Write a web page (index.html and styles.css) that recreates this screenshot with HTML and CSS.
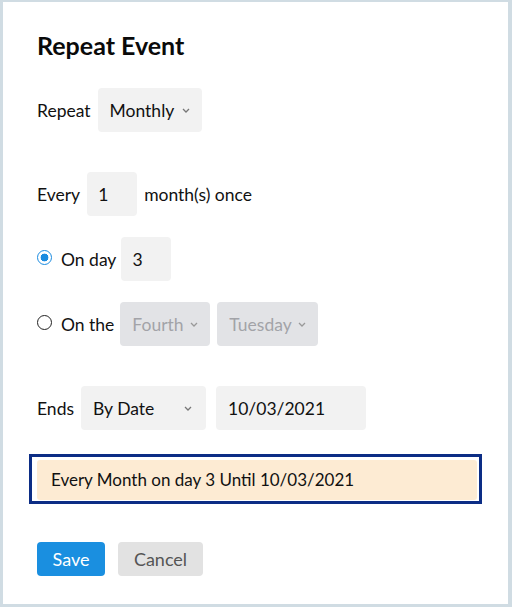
FILE: index.html
```html
<!DOCTYPE html>
<html lang="en">
<head>
    <meta charset="UTF-8">
    <title>Repeat Event</title>
    <link rel="stylesheet" href="styles.css">
</head>
<body>
    <div class="dialog">
        <h1>Repeat Event</h1>

        <div class="row row-repeat">
            <span class="label">Repeat</span>
            <div class="select sel-repeat">Monthly
                <svg class="chev" width="8" height="5" viewBox="0 0 8 5"><path d="M1 1l3 3 3-3" fill="none" stroke="#777" stroke-width="1.3"/></svg>
            </div>
        </div>

        <div class="row row-every">
            <span class="label">Every</span>
            <div class="field f-small">1</div>
            <span class="label">month(s) once</span>
        </div>

        <div class="row row-day">
            <span class="radio checked"></span>
            <span class="label">On day</span>
            <div class="field f-small f-day">3</div>
        </div>

        <div class="row row-the">
            <span class="radio"></span>
            <span class="label">On the</span>
            <div class="select disabled sel-fourth">Fourth
                <svg class="chev" width="8" height="5" viewBox="0 0 8 5"><path d="M1 1l3 3 3-3" fill="none" stroke="#999" stroke-width="1.3"/></svg>
            </div>
            <div class="select disabled sel-tuesday">Tuesday
                <svg class="chev" width="8" height="5" viewBox="0 0 8 5"><path d="M1 1l3 3 3-3" fill="none" stroke="#999" stroke-width="1.3"/></svg>
            </div>
        </div>

        <div class="row row-ends">
            <span class="label">Ends</span>
            <div class="select sel-ends">By Date
                <svg class="chev" width="8" height="5" viewBox="0 0 8 5"><path d="M1 1l3 3 3-3" fill="none" stroke="#777" stroke-width="1.3"/></svg>
            </div>
            <div class="field f-date">10/03/2021</div>
        </div>

        <div class="summary">
            <div class="summary-text">Every Month on day 3 Until 10/03/2021</div>
        </div>

        <div class="buttons">
            <button class="btn btn-save">Save</button>
            <button class="btn btn-cancel">Cancel</button>
        </div>
    </div>
</body>
</html>
```

FILE: styles.css
```css
body {
    margin: 0;
    padding: 0;
    font-family: Lato, "Open Sans", sans-serif;
    color: #111;
    background-color: #d0dce3;
}

.dialog {
    box-sizing: border-box;
    margin: 2px 4px 3px 3px;
    height: 602px;
    background-color: #fff;
    padding: 26px 34px 0 34px;
}

h1 {
    margin: 0;
    font-size: 25px;
    font-weight: bold;
    line-height: 34px;
    color: #0a0a0a;
}

.row {
    display: flex;
    align-items: center;
    gap: 7px;
    font-size: 17.5px;
}

.row-repeat { margin-top: 26px; }
.row-every  { margin-top: 40px; }
.row-day    { margin-top: 21px; }
.row-the    { margin-top: 21px; }
.row-ends   { margin-top: 40px; }

.select,
.field {
    box-sizing: border-box;
    height: 44px;
    display: flex;
    align-items: center;
    background-color: #f2f2f2;
    border-radius: 4px;
    padding: 0 12px;
    flex-shrink: 0;
}

.select {
    justify-content: space-between;
}

.chev {
    display: block;
    margin-left: 6px;
}

.sel-repeat  { width: 104px; }
.sel-fourth  { width: 90px; margin-left: -1px; }
.sel-tuesday { width: 101px; }
.sel-ends    { width: 125px; padding-right: 14px; margin-right: 3px; }

.f-small { width: 50px; padding-left: 11px; }
.f-day   { margin-left: -2px; }
.f-date  { width: 150px; }

.disabled {
    background-color: #e2e3e6;
    color: #a2a3a8;
}

.radio {
    box-sizing: border-box;
    width: 15px;
    height: 15px;
    border: 1.5px solid #222;
    border-radius: 50%;
    margin-right: 2px;
    margin-top: -3px;
    flex-shrink: 0;
}

.radio.checked {
    border-color: #1a8be0;
    background: radial-gradient(circle, #1a8be0 0 3.6px, #fff 4.2px);
}

.summary {
    margin: 24px -8px 0 -8px;
    border: 3px solid #0c2d85;
    padding: 3px 2px 1px 5px;
}

.summary-text {
    background-color: #fdebd3;
    border-radius: 3px;
    padding: 0 14px;
    height: 40px;
    line-height: 40px;
    font-size: 17px;
}

.buttons {
    display: flex;
    gap: 13px;
    margin-top: 38px;
}

.btn {
    height: 34px;
    border: none;
    border-radius: 4px;
    font-family: Lato, "Open Sans", sans-serif;
    font-size: 18px;
    padding: 0;
}

.btn-save {
    width: 68px;
    background-color: #1a8fe0;
    color: #fff;
}

.btn-cancel {
    width: 85px;
    background-color: #e2e2e2;
    color: #555;
}
```
